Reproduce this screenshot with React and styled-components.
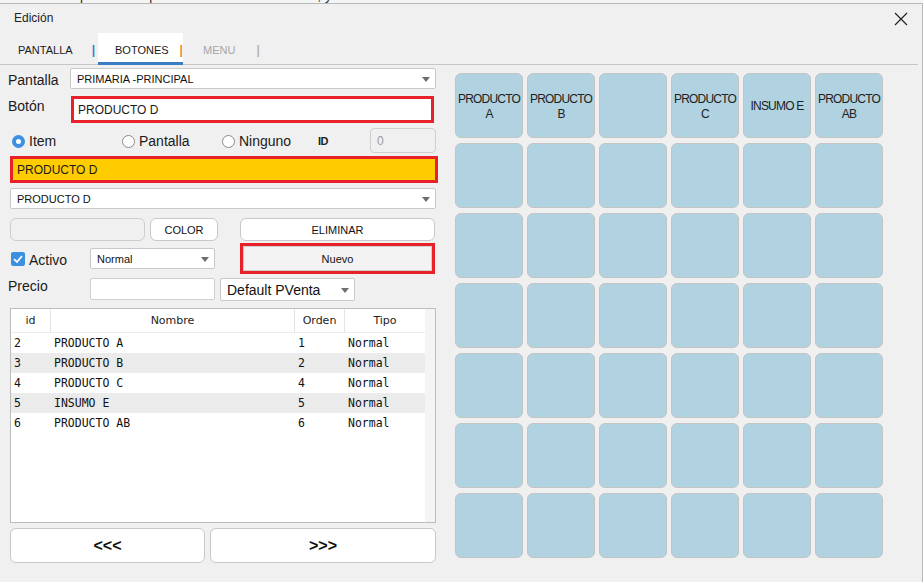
import React from 'react';
import styled, { createGlobalStyle } from 'styled-components';

const Global = createGlobalStyle`
  html, body { margin: 0; padding: 0; background: #f0f0f0; }
  body { font-family: "Liberation Sans", Arial, sans-serif; color: #1a1a1a; }
  * { box-sizing: border-box; }
`;

const Page = styled.div`
  width: 923px;
  height: 582px;
  overflow: hidden;
  display: flex;
  flex-direction: column;
`;

const BackText = styled.div`
  height: 3px;
  overflow: hidden;
  background: #f4f4f4;
  span {
    display: block;
    margin-top: -12px;
    font-size: 14px;
    line-height: 14px;
    white-space: nowrap;
    color: #333;
    padding-left: 2px;
  }
`;

const Window = styled.div`
  flex: 1;
  background: #f0f0f0;
  border-top: 1px solid #b9b9b9;
  border-right: 1px solid #b9b9b9;
  display: flex;
  flex-direction: column;
`;

const TitleBar = styled.div`
  height: 29px;
  display: flex;
  align-items: center;
  justify-content: space-between;
  padding: 0 14px 2px 14px;
  font-size: 12px;
  color: #222;
`;

const Close = styled.svg`
  width: 14px;
  height: 14px;
  margin-top: 2px;
`;

const TabBar = styled.div`
  height: 32px;
  margin-right: 4px;
  border-bottom: 1px solid #c6c6c6;
  display: flex;
  align-items: stretch;
`;

const Tab = styled.div`
  width: ${p => p.$w}px;
  padding-left: ${p => p.$pl}px;
  display: flex;
  align-items: center;
  font-size: 11px;
  color: ${p => (p.$muted ? '#a6a6a6' : '#1a1a1a')};
  background: ${p => (p.$active ? '#fff' : 'transparent')};
  border-bottom: 3px solid ${p => (p.$active ? '#3b7dc4' : 'transparent')};
  margin-bottom: -1px;
  padding-top: 5px;
`;

const Sep = styled.span`
  margin-left: ${p => p.$gap}px;
  color: ${p => p.$color};
  font-size: 12px;
  font-weight: bold;
`;

const Body = styled.div`
  display: flex;
  flex: 1;
`;

const Left = styled.div`
  width: 446px;
  padding-left: 10px;
  display: flex;
  flex-direction: column;
`;

const Row = styled.div`
  display: flex;
  align-items: ${p => p.$align || 'center'};
  height: ${p => p.$h}px;
  margin-top: ${p => p.$mt}px;
`;

const Label = styled.div`
  width: ${p => p.$w}px;
  margin-left: -2px;
  font-size: 14px;
  color: #1a1a1a;
  padding-top: ${p => p.$pt || 0}px;
`;

const Select = styled.div`
  position: relative;
  width: ${p => p.$w}px;
  height: ${p => p.$h || 21}px;
  margin-left: ${p => p.$ml || 0}px;
  background: #fff;
  border: 1px solid #c9c9c9;
  border-radius: 2px;
  display: flex;
  align-items: center;
  padding-left: ${p => p.$pl || 6}px;
  font-size: ${p => p.$fs || 11}px;
  color: #111;
  &::after {
    content: '';
    position: absolute;
    right: 5px;
    top: 50%;
    margin-top: -2px;
    border-left: 4px solid transparent;
    border-right: 4px solid transparent;
    border-top: 5px solid #6e6e6e;
  }
`;

const Field = styled.div`
  width: ${p => p.$w}px;
  height: ${p => p.$h}px;
  margin-left: ${p => p.$ml || 0}px;
  border: 3px solid #e8202a;
  background: ${p => p.$bg || '#fff'};
  display: flex;
  align-items: center;
  padding-left: ${p => p.$pl || 3}px;
  font-size: 12px;
  color: #1a1a1a;
`;

const Radio = styled.label`
  display: flex;
  align-items: center;
  width: ${p => p.$w}px;
  font-size: 14px;
  color: #1a1a1a;
  padding-top: 1px;
  &::before {
    content: '';
    width: 13px;
    height: 13px;
    border-radius: 50%;
    margin-left: 2px;
    margin-right: 4px;
    box-sizing: border-box;
    border: ${p => (p.$on ? '4px solid #3d8fe0' : '1px solid #8a8a8a')};
    background: #fff;
  }
`;

const IdTag = styled.span`
  width: 52px;
  font-size: 11px;
  font-weight: bold;
  color: #222;
  letter-spacing: -0.5px;
`;

const Disabled = styled.div`
  width: 66px;
  height: 25px;
  border: 1px solid #cfcfcf;
  border-radius: 4px;
  background: #f0f0f0;
  color: #9a9a9a;
  font-size: 12px;
  display: flex;
  align-items: center;
  padding-left: 6px;
`;

const Btn = styled.div`
  width: ${p => p.$w}px;
  height: ${p => p.$h || 23}px;
  margin-left: ${p => p.$ml || 0}px;
  border: 1px solid ${p => (p.$blank ? '#cdcdcd' : '#c8c8c8')};
  border-radius: 6px;
  background: ${p => (p.$blank ? '#f0f0f0' : '#fff')};
  display: flex;
  align-items: center;
  justify-content: center;
  font-size: ${p => p.$fs || 11}px;
  font-weight: ${p => (p.$bold ? 'bold' : 'normal')};
  color: #111;
`;

const NewBtn = styled.div`
  width: 195px;
  height: 31px;
  margin-left: 25px;
  border: 3px solid #e8202a;
  background: #f3f3f3;
  box-shadow: inset 0 0 0 1px #cfcfcf;
  display: flex;
  align-items: center;
  justify-content: center;
  font-size: 11px;
  color: #111;
`;

const Check = styled.label`
  display: flex;
  align-items: center;
  width: 80px;
  font-size: 14px;
  color: #1a1a1a;
  svg { margin-left: 1px; margin-right: 4px; }
  span { padding-top: 3px; }
`;

const Input = styled.div`
  width: ${p => p.$w}px;
  height: 22px;
  background: #fff;
  border: 1px solid #cfcfcf;
  border-radius: 2px;
`;

const Table = styled.div`
  width: 426px;
  height: 215px;
  border: 1px solid #bdbdbd;
  background: #fff;
  display: flex;
  font-family: "DejaVu Sans Mono", monospace;
`;

const TableMain = styled.div`
  width: 414px;
  display: flex;
  flex-direction: column;
`;

const Track = styled.div`
  flex: 1;
  background: #f4f4f4;
`;

const Grid = styled.div`
  display: grid;
  grid-template-columns: 40px 244px 50px 80px;
  height: ${p => p.$h}px;
  background: ${p => (p.$alt ? '#ebebeb' : '#fff')};
  align-items: center;
`;

const Head = styled.div`
  height: 100%;
  display: flex;
  align-items: center;
  justify-content: center;
  font-family: "DejaVu Sans", sans-serif;
  font-size: 11px;
  color: #222;
  border-right: ${p => (p.$last ? 'none' : '1px solid #e4e4e4')};
  border-bottom: 1px solid #ededed;
`;

const Cell = styled.div`
  padding-left: 3px;
  font-size: 11.5px;
  color: #111;
  white-space: pre;
`;

const NavRow = styled.div`
  display: flex;
  gap: 5px;
  margin-top: 5px;
`;

const Right = styled.div`
  flex: 1;
  padding: 8px 0 0 9px;
`;

const Pad = styled.div`
  display: grid;
  grid-template-columns: repeat(6, 68px);
  grid-auto-rows: 65px;
  column-gap: 4px;
  row-gap: 5px;
`;

const Key = styled.div`
  background: #b0d2e1;
  border: 1px solid #c4c4c4;
  border-radius: 6px;
  display: flex;
  align-items: center;
  justify-content: center;
  text-align: center;
  font-size: 12px;
  letter-spacing: -0.8px;
  line-height: 15px;
  color: #222;
  padding: 2px 1px 0;
`;

const rows = [
  ['2', 'PRODUCTO A', '1', 'Normal'],
  ['3', 'PRODUCTO B', '2', 'Normal'],
  ['4', 'PRODUCTO C', '4', 'Normal'],
  ['5', 'INSUMO E', '5', 'Normal'],
  ['6', 'PRODUCTO AB', '6', 'Normal'],
];

const keys = [
  ['PRODUCTO', 'A'],
  ['PRODUCTO', 'B'],
  null,
  ['PRODUCTO', 'C'],
  ['INSUMO E'],
  ['PRODUCTO', 'AB'],
];

export default function App() {
  const cells = Array.from({ length: 42 }, (_, i) => keys[i] || null);
  return (
    <Page>
      <Global />
      <BackText>
        <span>ere el texto que desea que se visualice en el botón, y en el</span>
      </BackText>
      <Window>
        <TitleBar>
          <span>Edición</span>
          <Close viewBox="0 0 14 14">
            <path d="M1 1 L13 13 M13 1 L1 13" stroke="#222" strokeWidth="1.2" />
          </Close>
        </TitleBar>
        <TabBar>
          <Tab $w={98} $pl={18}>
            PANTALLA<Sep $gap={19} $color="#3b7dc4">|</Sep>
          </Tab>
          <Tab $w={85} $pl={17} $active>
            BOTONES<Sep $gap={11} $color="#e08a2c">|</Sep>
          </Tab>
          <Tab $w={80} $pl={20} $muted>
            MENU<Sep $gap={21} $color="#b5b5b5">|</Sep>
          </Tab>
        </TabBar>
        <Body>
          <Left>
            <Row $h={21} $mt={3}>
              <Label $w={62} $pt={2}>Pantalla</Label>
              <Select $w={366}>PRIMARIA -PRINCIPAL</Select>
            </Row>
            <Row $h={27} $mt={7} $align="flex-start">
              <Label $w={63} $pt={2}>Botón</Label>
              <Field $w={363} $h={27} $pl={4}>PRODUCTO D</Field>
            </Row>
            <Row $h={25} $mt={5}>
              <Radio $w={110} $on>Item</Radio>
              <Radio $w={100}>Pantalla</Radio>
              <Radio $w={98}>Ninguno</Radio>
              <IdTag>ID</IdTag>
              <Disabled>0</Disabled>
            </Row>
            <Row $h={27} $mt={3}>
              <Field $w={428} $h={27} $bg="#ffcc00" $pl={4}>PRODUCTO D</Field>
            </Row>
            <Row $h={21} $mt={5}>
              <Select $w={426}>PRODUCTO D</Select>
            </Row>
            <Row $h={23} $mt={9}>
              <Btn $w={135} $blank />
              <Btn $w={68} $ml={5}>COLOR</Btn>
              <Btn $w={195} $ml={22}>ELIMINAR</Btn>
            </Row>
            <Row $h={31} $mt={2}>
              <Check>
                <svg width="14" height="14" viewBox="0 0 14 14">
                  <rect width="14" height="14" rx="2" fill="#3d8fe0" />
                  <path d="M3 7.2 L6 10 L11 4" stroke="#fff" strokeWidth="1.8" fill="none" />
                </svg>
                <span>Activo</span>
              </Check>
              <Select $w={125}>Normal</Select>
              <NewBtn>Nuevo</NewBtn>
            </Row>
            <Row $h={23} $mt={4} $align="flex-start">
              <Label $w={82}>Precio</Label>
              <Input $w={125} />
              <Select $w={135} $h={23} $ml={5} $fs={14}>Default PVenta</Select>
            </Row>
            <Row $h={215} $mt={7}>
              <Table>
                <TableMain>
                  <Grid $h={24}>
                    <Head>id</Head>
                    <Head>Nombre</Head>
                    <Head>Orden</Head>
                    <Head $last>Tipo</Head>
                  </Grid>
                  {rows.map((r, i) => (
                    <Grid key={r[0]} $h={20} $alt={i % 2 === 1}>
                      {r.map((c, j) => (
                        <Cell key={j}>{c}</Cell>
                      ))}
                    </Grid>
                  ))}
                </TableMain>
                <Track />
              </Table>
            </Row>
            <NavRow>
              <Btn $w={195} $h={35} $fs={16} $bold>&lt;&lt;&lt;</Btn>
              <Btn $w={226} $h={35} $fs={16} $bold>&gt;&gt;&gt;</Btn>
            </NavRow>
          </Left>
          <Right>
            <Pad>
              {cells.map((k, i) => (
                <Key key={i}>
                  {k && (
                    <span>
                      {k.map((t, j) => (
                        <React.Fragment key={j}>
                          {j > 0 && <br />}
                          {t}
                        </React.Fragment>
                      ))}
                    </span>
                  )}
                </Key>
              ))}
            </Pad>
          </Right>
        </Body>
      </Window>
    </Page>
  );
}
